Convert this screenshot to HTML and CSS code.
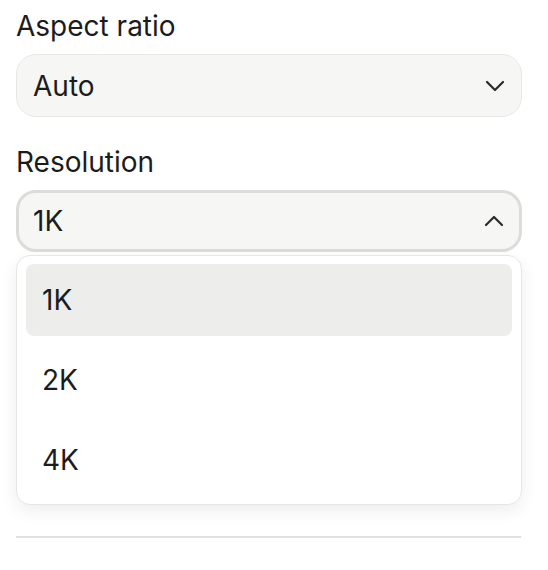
FILE: index.html
```html
<!DOCTYPE html>
<html>
<head>
<meta charset="utf-8">
<link rel="stylesheet" href="styles.css">
</head>
<body>
<div class="panel">
  <div class="field field-aspect">
    <div class="label">Aspect ratio</div>
    <div class="select">
      <span class="value">Auto</span>
      <svg class="chev" width="20" height="12" viewBox="0 0 20 12"><path d="M2 2 L10 10 L18 2" fill="none" stroke="#2a2a2a" stroke-width="2.2" stroke-linecap="round" stroke-linejoin="round"/></svg>
    </div>
  </div>
  <div class="field field-res">
    <div class="label">Resolution</div>
    <div class="select open">
      <span class="value">1K</span>
      <svg class="chev" width="20" height="12" viewBox="0 0 20 12"><path d="M2 10 L10 2 L18 10" fill="none" stroke="#2a2a2a" stroke-width="2.2" stroke-linecap="round" stroke-linejoin="round"/></svg>
    </div>
    <div class="menu">
      <div class="option active">1K</div>
      <div class="option">2K</div>
      <div class="option">4K</div>
    </div>
  </div>
  <div class="divider"></div>
</div>
</body>
</html>
```

FILE: styles.css
```css
html, body {
  margin: 0;
  padding: 0;
  background: #ffffff;
}
body {
  font-family: Inter, "Noto Sans", sans-serif;
  color: #1c1c1c;
}
.panel {
  padding: 9px 26px 0 16px;
  display: flex;
  flex-direction: column;
}
.field {
  display: flex;
  flex-direction: column;
}
.field-res {
  margin-top: 28px;
}
.label {
  font-size: 28px;
  line-height: 34px;
  margin-bottom: 11px;
}
.select {
  box-sizing: border-box;
  height: 63px;
  border: 1px solid #e8e8e6;
  background: #f6f6f4;
  border-radius: 20px;
  display: flex;
  align-items: center;
  justify-content: space-between;
  padding: 0 16px 0 16px;
  font-size: 28px;
}
.select.open {
  height: 62px;
  border: 3px solid #dcdcdb;
  padding: 0 15px 0 14px;
}
.value {
  line-height: 34px;
}
.chev {
  display: block;
}
.menu {
  margin-top: 3px;
  box-sizing: border-box;
  height: 250px;
  border: 1px solid #e6e6e6;
  border-radius: 14px;
  background: #ffffff;
  box-shadow: 0 6px 18px rgba(0, 0, 0, 0.07);
  padding: 8px 9px;
  display: flex;
  flex-direction: column;
  gap: 8px;
}
.option {
  height: 72px;
  border-radius: 8px;
  display: flex;
  align-items: center;
  padding-left: 16px;
  font-size: 28px;
}
.option.active {
  background: #ededeb;
}
.divider {
  margin-top: 31px;
  height: 2px;
  background: #e0e0e0;
  margin-right: 1px;
}
```
